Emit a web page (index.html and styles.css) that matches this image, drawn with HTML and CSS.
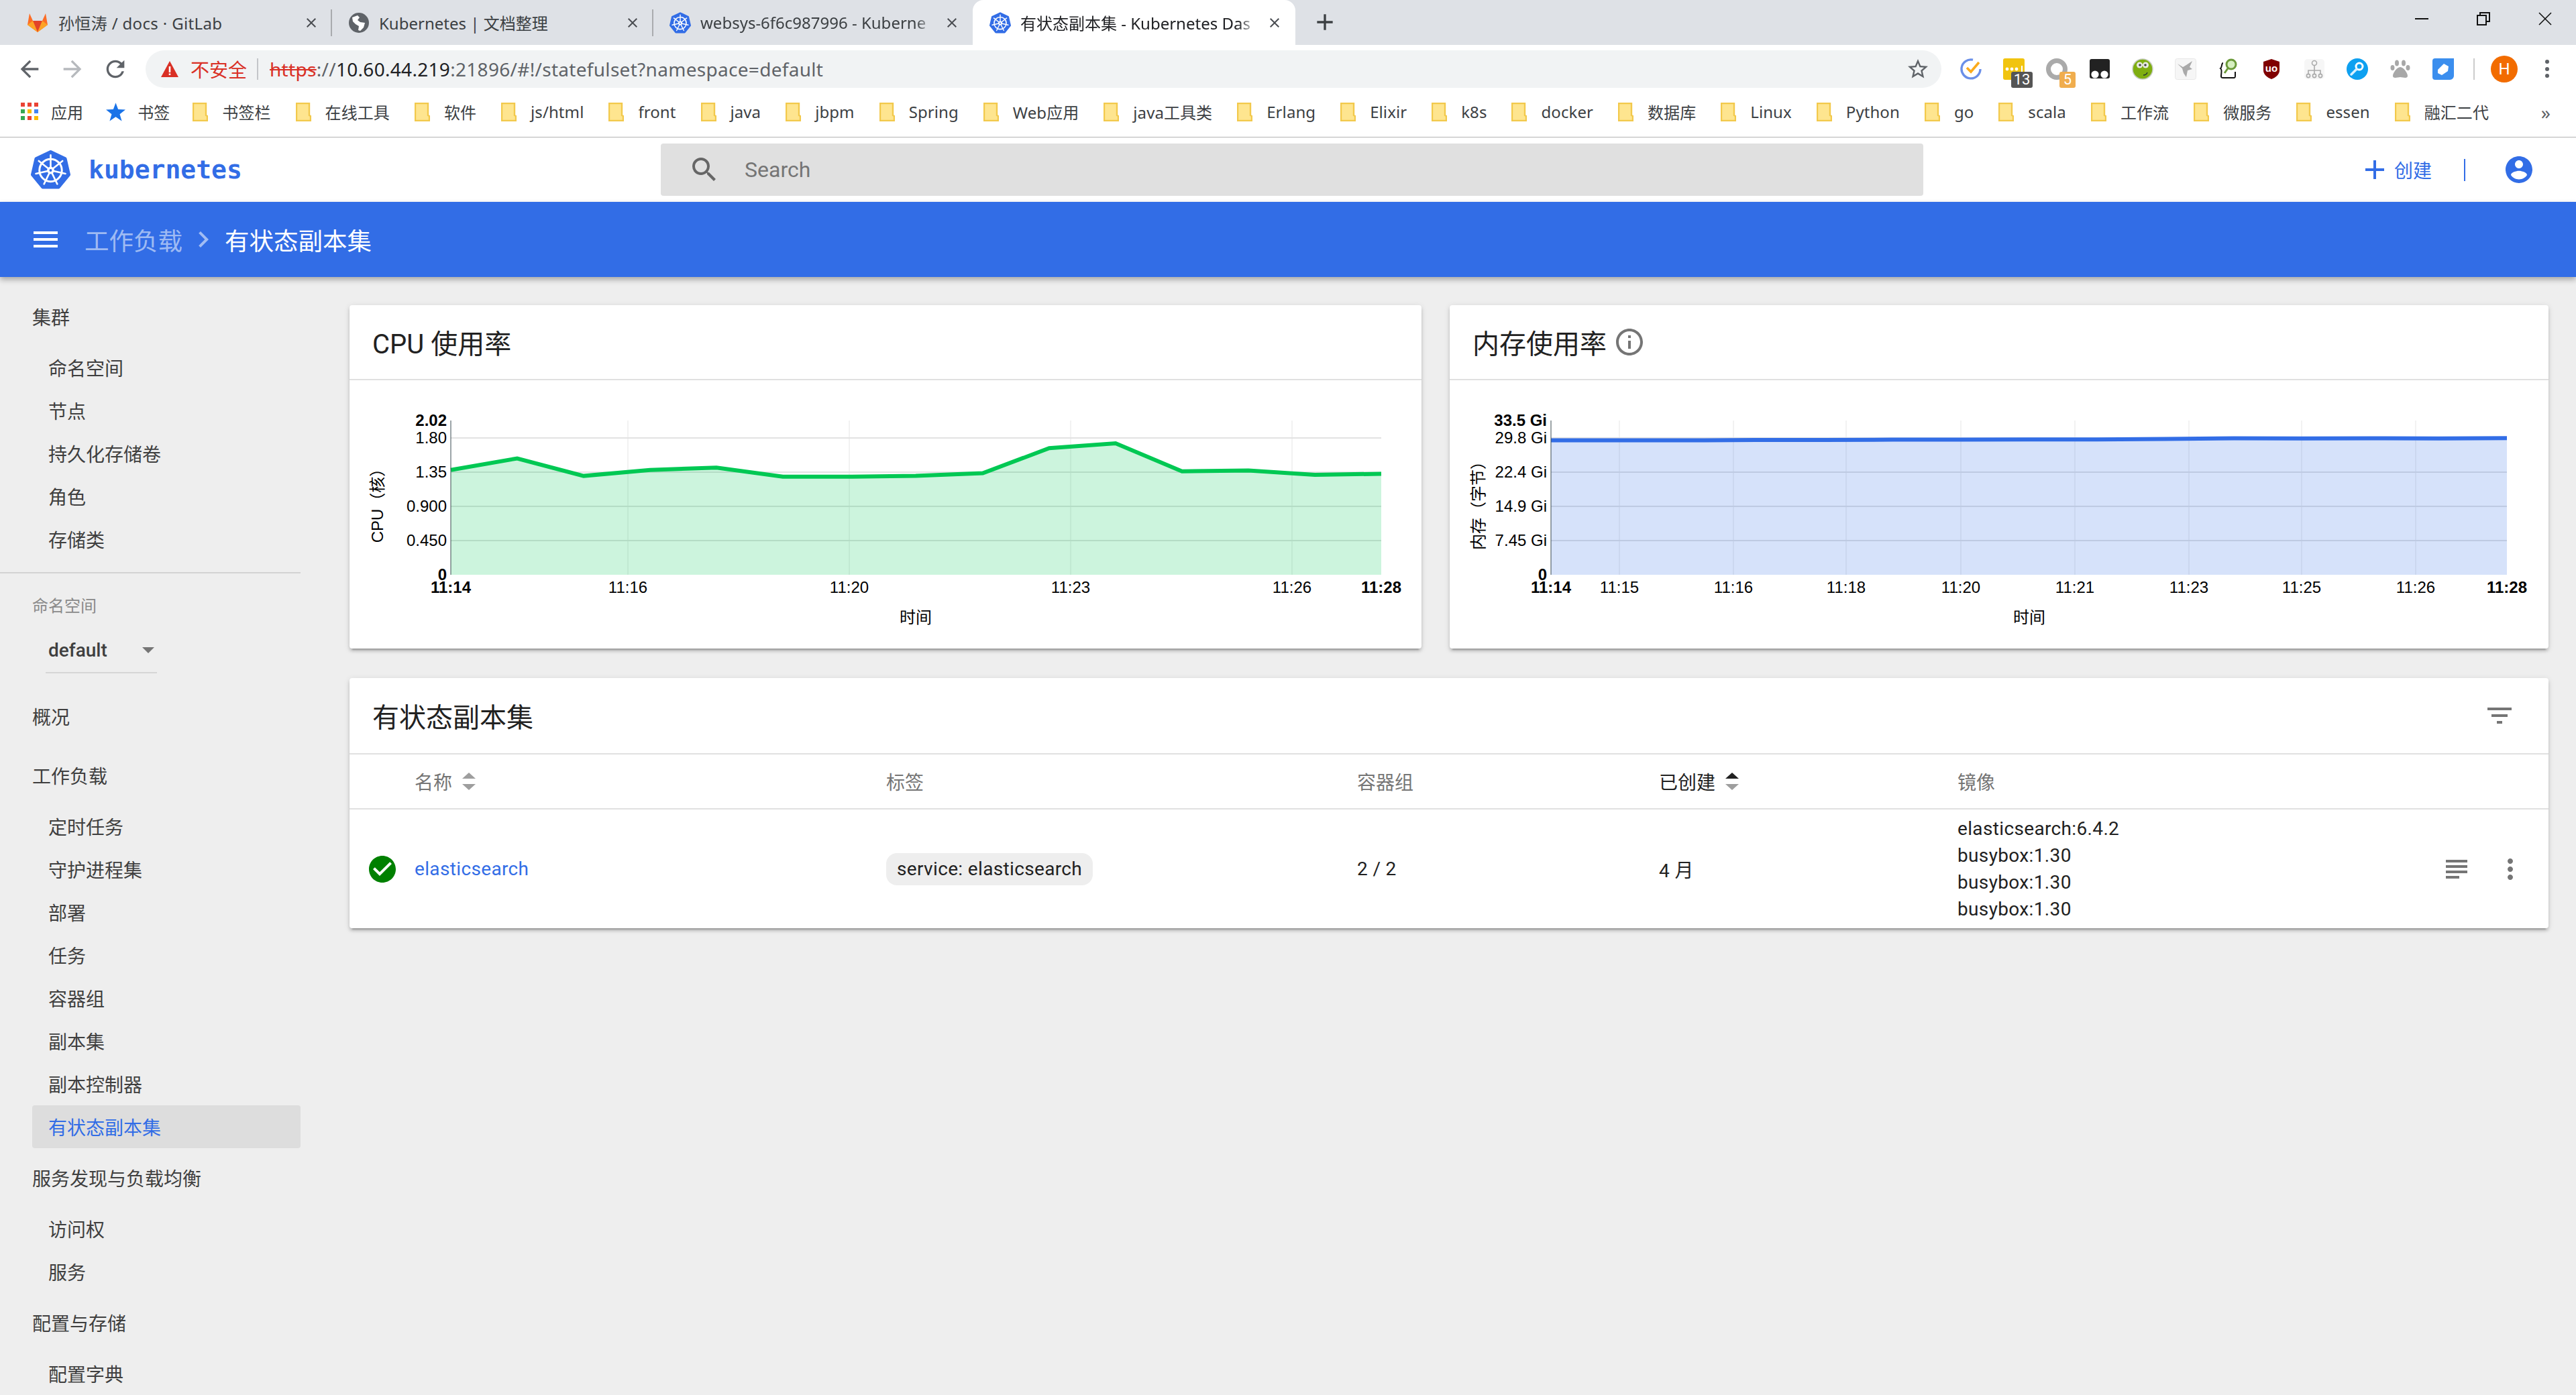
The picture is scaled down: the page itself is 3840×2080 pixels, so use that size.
FILE: index.html
```html
<!DOCTYPE html>
<html lang="zh">
<head>
<meta charset="utf-8">
<title>有状态副本集 - Kubernetes Dashboard</title>
<link rel="stylesheet" href="styles.css">
</head>
<body>
<svg class="defs" width="0" height="0">
  <symbol id="k8s" viewBox="0 0 60 60">
    <polygon points="30,3 52,13.5 57.5,37.5 42,56.5 18,56.5 2.5,37.5 8,13.5" fill="#326de6" stroke="#326de6" stroke-width="5" stroke-linejoin="round"/>
    <circle cx="30" cy="31" r="17" fill="none" stroke="#fff" stroke-width="3"/>
    <path d="M30 31V8M30 31L48 16.7M30 31L52.4 36.1M30 31L40 51.7M30 31L20 51.7M30 31L7.6 36.1M30 31L12 16.7" stroke="#fff" stroke-width="2.6" stroke-linecap="round"/>
    <circle cx="30" cy="31" r="5.5" fill="#fff"/>
    <circle cx="30" cy="31" r="2" fill="#326de6"/>
  </symbol>
  <symbol id="folder" viewBox="0 0 23 28">
    <path d="M1 1H20V19L22 20V27H1Z" fill="#fee58f" stroke="#f2c94c" stroke-width="2.4"/>
  </symbol>
  <symbol id="x" viewBox="0 0 24 24">
    <path d="M19 6.41L17.59 5 12 10.59 6.41 5 5 6.41 10.59 12 5 17.59 6.41 19 12 13.41 17.59 19 19 17.59 13.41 12z"/>
  </symbol>
  <symbol id="add" viewBox="0 0 24 24"><path d="M19 13h-6v6h-2v-6H5v-2h6V5h2v6h6v2z"/></symbol>
</svg>

<div class="tabstrip">
  <div class="tab tab-first">
    <svg class="favicon" viewBox="0 0 32 32"><path d="M16 30L1 19 4 2l5 11h14l5-11 3 17z" fill="#fc6d26"/><path d="M16 30L9 13h14z" fill="#e24329"/><path d="M16 30L1 19l8-6z" fill="#fca326"/><path d="M16 30l15-11-8-6z" fill="#fca326"/></svg>
    <span class="tab-label">孙恒涛 / docs · GitLab</span>
    <svg class="tab-close"><use href="#x"/></svg>
  </div>
  <div class="tab">
    <svg class="favicon" viewBox="0 0 32 32"><circle cx="16" cy="16" r="15" fill="#5f6368"/><path d="M6 8l8-3 3 3-3 4 4 3 7 1-2 7-5 5-3-1 1-6-5-3-4-4z" fill="#fff"/></svg>
    <span class="tab-label">Kubernetes | 文档整理</span>
    <svg class="tab-close"><use href="#x"/></svg>
  </div>
  <div class="tab tab-last">
    <svg class="favicon"><use href="#k8s"/></svg>
    <span class="tab-label tab-fade">websys-6f6c987996 - Kuberne</span>
    <svg class="tab-close"><use href="#x"/></svg>
  </div>
  <div class="tab tab-active">
    <svg class="favicon"><use href="#k8s"/></svg>
    <span class="tab-label tab-fade">有状态副本集 - Kubernetes Das</span>
    <svg class="tab-close"><use href="#x"/></svg>
  </div>
  <svg class="new-tab"><use href="#add"/></svg>
  <div class="window-controls">
    <div class="win-btn"><svg viewBox="0 0 20 20" width="20" height="20"><path d="M0 10h20" stroke="#111" stroke-width="2"/></svg></div>
    <div class="win-btn"><svg viewBox="0 0 20 20" width="20" height="20"><path d="M1 5h13v14H1zM5 5V1h14v13h-5" fill="none" stroke="#111" stroke-width="2"/></svg></div>
    <div class="win-btn"><svg viewBox="0 0 20 20" width="20" height="20"><path d="M1 1l18 18M19 1L1 19" stroke="#111" stroke-width="1.6"/></svg></div>
  </div>
</div>

<div class="toolbar">
  <div class="nav-btns">
    <svg class="nav-icon" viewBox="0 0 24 24"><path d="M20 11H7.83l5.59-5.59L12 4l-8 8 8 8 1.41-1.41L7.83 13H20v-2z"/></svg>
    <svg class="nav-icon nav-off" viewBox="0 0 24 24"><path d="M12 4l-1.41 1.41L16.17 11H4v2h12.17l-5.58 5.59L12 20l8-8z"/></svg>
    <svg class="nav-icon" viewBox="0 0 24 24"><path d="M17.65 6.35A7.958 7.958 0 0 0 12 4c-4.42 0-7.99 3.58-7.99 8s3.57 8 7.99 8c3.73 0 6.84-2.55 7.73-6h-2.08A5.99 5.99 0 0 1 12 18c-3.31 0-6-2.69-6-6s2.69-6 6-6c1.66 0 3.14.69 4.22 1.78L13 11h7V4l-2.35 2.35z"/></svg>
  </div>
  <div class="omnibox">
    <svg class="warn" viewBox="0 0 28 28"><path d="M14 2L27 26H1z" fill="#d93025"/><path d="M12.7 10h2.6v9h-2.6zM12.7 20.5h2.6V23h-2.6z" fill="#fff"/></svg>
    <span class="insecure">不安全</span>
    <span class="omni-sep"></span>
    <span class="url"><s class="scheme">https</s>://<span class="host">10.60.44.219</span>:21896/#!/statefulset?namespace=default</span>
    <svg class="star" viewBox="0 0 24 24"><path d="M22 9.24l-7.19-.62L12 2 9.19 8.63 2 9.24l5.46 4.73L5.82 21 12 17.27 18.18 21l-1.63-7.03L22 9.24zM12 15.4l-3.76 2.27 1-4.28-3.32-2.88 4.38-.38L12 6.1l1.71 4.04 4.38.38-3.32 2.88 1 4.28L12 15.4z"/></svg>
  </div>
  <div class="extensions">
    <div class="ext"><svg viewBox="0 0 32 32"><path d="M19 2.2A14 14 0 1 0 30 16" fill="none" stroke="#6a8fe8" stroke-width="3.4"/><path d="M10 14l6 6L28 6" fill="none" stroke="#fbab1c" stroke-width="3.6"/></svg></div>
    <div class="ext"><svg viewBox="0 0 32 32"><rect width="32" height="32" rx="3" fill="#f1c40f"/><circle cx="6" cy="16" r="2.4" fill="#fff"/><circle cx="13" cy="16" r="2.4" fill="#fff"/><circle cx="20" cy="16" r="2.4" fill="#fff"/><path d="M28 11v9" stroke="#fff" stroke-width="2"/></svg><span class="ext-badge badge-dark">13</span></div>
    <div class="ext"><svg viewBox="0 0 32 32"><circle cx="16" cy="16" r="12.5" fill="none" stroke="#aaa" stroke-width="7"/></svg><span class="ext-badge badge-orange">5</span></div>
    <div class="ext"><svg viewBox="0 0 32 32"><path d="M4 1h24a3 3 0 0 1 3 3v23a3 3 0 0 1-3 3H4a3 3 0 0 1-3-3V4a3 3 0 0 1 3-3z" fill="#222"/><circle cx="9" cy="24" r="5.6" fill="#fff"/><circle cx="23" cy="24" r="5.6" fill="#fff"/></svg></div>
    <div class="ext"><svg viewBox="0 0 32 32"><circle cx="16" cy="16" r="15" fill="#7fae10" stroke="#c5cbbf" stroke-width="1.5"/><circle cx="11.500" cy="10" r="4.500" fill="#e8ebe0"/><circle cx="20.500" cy="10" r="4.500" fill="#e8ebe0"/><circle cx="12" cy="10" r="1.800" fill="#444"/><circle cx="20" cy="10" r="1.800" fill="#444"/><path d="M17 25c3 0 5-1 6-4" fill="none" stroke="#233" stroke-width="1.3"/></svg></div>
    <div class="ext"><svg viewBox="0 0 32 32"><rect x="0.500" y="0.500" width="31" height="31" rx="3" fill="#f6f6f6" stroke="#e8e8e8"/><path d="M4 8l8 5 5-3 9-6-4 9 4 3-7 2-2 10-4-6-2-7z" fill="#a9a9a9"/></svg></div>
    <div class="ext"><svg viewBox="0 0 32 32"><path d="M8 7C5 7 7 13 4 15c3 2 1 6 1 12 0 2 1 2 3 2h16c2 0 2-1 2-3v-6" fill="none" stroke="#111" stroke-width="2"/><circle cx="20" cy="9" r="7" fill="#d6efc0" stroke="#6b9a3a" stroke-width="3"/><path d="M15 15l-5 7" stroke="#6b9a3a" stroke-width="3"/></svg></div>
    <div class="ext"><svg viewBox="0 0 32 32"><path d="M16 1l12 4v13c0 6-6 11-12 13C10 29 4 24 4 18V5z" fill="#800000"/><text class="ublock" x="16" y="20">uo</text></svg></div>
    <div class="ext"><svg viewBox="0 0 32 32"><rect x="1" y="1" width="30" height="30" rx="5" fill="#f6f6f6"/><circle cx="16" cy="7" r="3.500" fill="none" stroke="#aaa" stroke-width="1.600"/><path d="M16 10v8M7 23v-5h18v5M16 18v5" fill="none" stroke="#aaa" stroke-width="1.600"/><circle cx="7" cy="26" r="2.600" fill="none" stroke="#aaa" stroke-width="1.600"/><circle cx="16" cy="26" r="2.600" fill="none" stroke="#aaa" stroke-width="1.600"/><circle cx="25" cy="26" r="2.600" fill="none" stroke="#aaa" stroke-width="1.600"/></svg></div>
    <div class="ext"><svg viewBox="0 0 32 32"><circle cx="16" cy="16" r="16" fill="#0ea0f0"/><circle cx="19" cy="12" r="5" fill="none" stroke="#fff" stroke-width="3"/><path d="M15 16L7 24" stroke="#d9f0ff" stroke-width="3.500" stroke-linecap="round"/></svg></div>
    <div class="ext"><svg viewBox="0 0 32 32" fill="#a8a8a8"><ellipse cx="11" cy="7" rx="3" ry="4.500"/><ellipse cx="21" cy="7" rx="3" ry="4.500"/><ellipse cx="4.500" cy="14" rx="3" ry="4"/><ellipse cx="27.500" cy="14" rx="3" ry="4"/><path d="M16 13c5 0 11 9 11 13 0 5-7 2-11 2s-11 3-11-2c0-4 6-13 11-13z"/></svg></div>
    <div class="ext"><svg viewBox="0 0 32 32"><path d="M4 0H32V26a6 6 0 0 1-6 6H4a4 4 0 0 1-4-4V4a4 4 0 0 1 4-4z" fill="#3b8eee"/><path d="M8 17l9-9 7 4-1 7-9 6-6-3z" fill="#fff"/></svg></div>
  </div>
  <span class="tool-sep"></span>
  <div class="avatar">H</div>
  <svg class="chrome-menu" viewBox="0 0 8 32"><circle cx="4" cy="5" r="3"/><circle cx="4" cy="16" r="3"/><circle cx="4" cy="26" r="3"/></svg>
</div>

<div class="bookmarks">
  <div class="bm bm-lead">
    <svg class="bm-apps" viewBox="0 0 27 27"><path fill="#ea4335" d="M0 0h6v6H0zM10 0h6v6h-6zM20 0h6v6h-6z"/><path fill="#34a853" d="M0 10h6v6H0z"/><path fill="#fbbc04" d="M10 10h6v6h-6z"/><path fill="#4285f4" d="M20 10h6v6h-6z"/><path fill="#34a853" d="M0 20h6v6H0z"/><path fill="#ea4335" d="M10 20h6v6h-6z"/><path fill="#fbbc04" d="M20 20h6v6h-6z"/></svg>
    <span>应用</span>
  </div>
  <div class="bm bm-lead">
    <svg class="bm-star" viewBox="0 0 24 24"><path fill="#1a73e8" d="M12 1l3 8 9 .5-7 5.500 2.500 8.500L12 18.500 4.500 23.500 7 15 0 9.500 9 9z"/></svg>
    <span>书签</span>
  </div>
  <div class="bm"><svg class="bm-folder"><use href="#folder"/></svg><span>书签栏</span></div>
  <div class="bm"><svg class="bm-folder"><use href="#folder"/></svg><span>在线工具</span></div>
  <div class="bm"><svg class="bm-folder"><use href="#folder"/></svg><span>软件</span></div>
  <div class="bm"><svg class="bm-folder"><use href="#folder"/></svg><span>js/html</span></div>
  <div class="bm"><svg class="bm-folder"><use href="#folder"/></svg><span>front</span></div>
  <div class="bm"><svg class="bm-folder"><use href="#folder"/></svg><span>java</span></div>
  <div class="bm"><svg class="bm-folder"><use href="#folder"/></svg><span>jbpm</span></div>
  <div class="bm"><svg class="bm-folder"><use href="#folder"/></svg><span>Spring</span></div>
  <div class="bm"><svg class="bm-folder"><use href="#folder"/></svg><span>Web应用</span></div>
  <div class="bm"><svg class="bm-folder"><use href="#folder"/></svg><span>java工具类</span></div>
  <div class="bm"><svg class="bm-folder"><use href="#folder"/></svg><span>Erlang</span></div>
  <div class="bm"><svg class="bm-folder"><use href="#folder"/></svg><span>Elixir</span></div>
  <div class="bm"><svg class="bm-folder"><use href="#folder"/></svg><span>k8s</span></div>
  <div class="bm"><svg class="bm-folder"><use href="#folder"/></svg><span>docker</span></div>
  <div class="bm"><svg class="bm-folder"><use href="#folder"/></svg><span>数据库</span></div>
  <div class="bm"><svg class="bm-folder"><use href="#folder"/></svg><span>Linux</span></div>
  <div class="bm"><svg class="bm-folder"><use href="#folder"/></svg><span>Python</span></div>
  <div class="bm"><svg class="bm-folder"><use href="#folder"/></svg><span>go</span></div>
  <div class="bm"><svg class="bm-folder"><use href="#folder"/></svg><span>scala</span></div>
  <div class="bm"><svg class="bm-folder"><use href="#folder"/></svg><span>工作流</span></div>
  <div class="bm"><svg class="bm-folder"><use href="#folder"/></svg><span>微服务</span></div>
  <div class="bm"><svg class="bm-folder"><use href="#folder"/></svg><span>essen</span></div>
  <div class="bm"><svg class="bm-folder"><use href="#folder"/></svg><span>融汇二代</span></div>
  <span class="bm-more">»</span>
</div>

<header class="app-header">
  <div class="brand">
    <svg class="brand-logo"><use href="#k8s"/></svg>
    <span class="brand-name">kubernetes</span>
  </div>
  <div class="search">
    <svg class="icon48 search-icon" viewBox="0 0 24 24"><path d="M15.5 14h-.79l-.28-.27A6.471 6.471 0 0 0 16 9.500 6.500 6.500 0 1 0 9.500 16c1.610 0 3.090-.59 4.230-1.570l.27.28v.79l5 4.990L20.490 19l-4.990-5zm-6 0C7.010 14 5 11.990 5 9.500S7.010 5 9.500 5 14 7.010 14 9.500 11.990 14 9.500 14z"/></svg>
    <span class="search-text">Search</span>
  </div>
  <div class="header-actions">
    <svg class="icon48 blue"><use href="#add"/></svg>
    <span class="create">创建</span>
    <span class="action-sep"></span>
    <svg class="icon48 blue account" viewBox="0 0 24 24"><path d="M12 2C6.480 2 2 6.480 2 12s4.480 10 10 10 10-4.480 10-10S17.520 2 12 2zm0 3c1.660 0 3 1.340 3 3s-1.340 3-3 3-3-1.340-3-3 1.340-3 3-3zm0 14.200c-2.500 0-4.710-1.280-6-3.220.03-1.990 4-3.080 6-3.080 1.990 0 5.970 1.090 6 3.080-1.290 1.940-3.500 3.220-6 3.220z"/></svg>
  </div>
</header>

<div class="crumbs">
  <svg class="icon48 white" viewBox="0 0 24 24"><path d="M3 18h18v-2H3v2zm0-5h18v-2H3v2zm0-7v2h18V6H3z"/></svg>
  <span class="crumb-parent">工作负载</span>
  <svg class="icon48 crumb-chevron" viewBox="0 0 24 24"><path d="M10 6L8.590 7.410 13.170 12l-4.580 4.590L10 18l6-6z"/></svg>
  <span class="crumb-current">有状态副本集</span>
</div>

<div class="layout">
  <nav class="sidebar">
    <div class="nav-parent">集群</div>
    <div class="nav-child">命名空间</div>
    <div class="nav-child">节点</div>
    <div class="nav-child">持久化存储卷</div>
    <div class="nav-child">角色</div>
    <div class="nav-child">存储类</div>
    <div class="nav-divider"></div>
    <div class="ns-label">命名空间</div>
    <div class="ns-select"><span>default</span><span class="ns-caret"></span></div>
    <div class="nav-parent">概况</div>
    <div class="nav-parent">工作负载</div>
    <div class="nav-child">定时任务</div>
    <div class="nav-child">守护进程集</div>
    <div class="nav-child">部署</div>
    <div class="nav-child">任务</div>
    <div class="nav-child">容器组</div>
    <div class="nav-child">副本集</div>
    <div class="nav-child">副本控制器</div>
    <div class="nav-child nav-active">有状态副本集</div>
    <div class="nav-parent">服务发现与负载均衡</div>
    <div class="nav-child">访问权</div>
    <div class="nav-child">服务</div>
    <div class="nav-parent">配置与存储</div>
    <div class="nav-child">配置字典</div>
  </nav>

  <main class="content">
    <div class="charts">
      <section class="card chart-cpu">
        <div class="card-title">CPU 使用率</div>
        <svg class="chart" viewBox="521 567 1598 400">
          <g class="grid-v">
            <path d="M936 627V857M1266 627V857M1596 627V857M1926 627V857"/>
          </g>
          <g class="grid-h">
            <path d="M672 653H2059M672 704H2059M672 755H2059M672 806H2059"/>
          </g>
          <path class="area-green" d="M672 700.700L771 683.500 870 709.600 969 700.700 1068 697.200 1167 710.700 1266 710.700 1365 709.600 1465 705.500 1564 668.300 1663 661 1762 702.700 1861 701.400 1960 707.900 2059 706.500V857H672Z"/>
          <path class="line-green" d="M672 700.700L771 683.500 870 709.600 969 700.700 1068 697.200 1167 710.700 1266 710.700 1365 709.600 1465 705.500 1564 668.300 1663 661 1762 702.700 1861 701.400 1960 707.900 2059 706.500"/>
          <path class="axis" d="M672 627V857"/>
          <g class="tick end">
            <text class="bold" x="666" y="635">2.02</text>
            <text x="666" y="661">1.80</text>
            <text x="666" y="712">1.35</text>
            <text x="666" y="763">0.900</text>
            <text x="666" y="814">0.450</text>
            <text class="bold" x="666" y="865">0</text>
          </g>
          <g class="tick mid">
            <text class="bold" x="672" y="884">11:14</text>
            <text x="936" y="884">11:16</text>
            <text x="1266" y="884">11:20</text>
            <text x="1596" y="884">11:23</text>
            <text x="1926" y="884">11:26</text>
            <text class="bold" x="2059" y="884">11:28</text>
            <text x="1365" y="929">时间</text>
          </g>
          <text class="tick mid" transform="translate(571 748) rotate(-90)">CPU（核）</text>
        </svg>
      </section>
      <section class="card chart-mem">
        <div class="card-title">内存使用率<svg class="icon48 grey info" viewBox="0 0 24 24"><path d="M11 17h2v-6h-2v6zm1-15C6.480 2 2 6.480 2 12s4.480 10 10 10 10-4.480 10-10S17.520 2 12 2zm0 18c-4.410 0-8-3.590-8-8s3.590-8 8-8 8 3.590 8 8-3.590 8-8 8zm-1-11h2V7h-2v2z"/></svg></div>
        <svg class="chart" viewBox="2161 567 1638 400">
          <g class="grid-v">
            <path d="M2414 627V857M2584 627V857M2752 627V857M2923 627V857M3093 627V857M3263 627V857M3431 627V857M3601 627V857"/>
          </g>
          <g class="grid-h">
            <path d="M2312 653H3737M2312 704H3737M2312 755H3737M2312 806H3737"/>
          </g>
          <path class="area-blue" d="M2312 656.600L2414 656.600 2516 656.600 2617 655.900 2719 655.900 2821 655.600 2923 655.600 3025 655.200 3126 655.200 3228 654.500 3330 653.500 3432 653.800 3534 653.500 3635 653.800 3737 653.200V857H2312Z"/>
          <path class="line-blue" d="M2312 656.600L2414 656.600 2516 656.600 2617 655.900 2719 655.900 2821 655.600 2923 655.600 3025 655.200 3126 655.200 3228 654.500 3330 653.500 3432 653.800 3534 653.500 3635 653.800 3737 653.200"/>
          <path class="axis" d="M2312 627V857"/>
          <g class="tick end">
            <text class="bold" x="2306" y="635">33.5 Gi</text>
            <text x="2306" y="661">29.8 Gi</text>
            <text x="2306" y="712">22.4 Gi</text>
            <text x="2306" y="763">14.9 Gi</text>
            <text x="2306" y="814">7.45 Gi</text>
            <text class="bold" x="2306" y="865">0</text>
          </g>
          <g class="tick mid">
            <text class="bold" x="2312" y="884">11:14</text>
            <text x="2414" y="884">11:15</text>
            <text x="2584" y="884">11:16</text>
            <text x="2752" y="884">11:18</text>
            <text x="2923" y="884">11:20</text>
            <text x="3093" y="884">11:21</text>
            <text x="3263" y="884">11:23</text>
            <text x="3431" y="884">11:25</text>
            <text x="3601" y="884">11:26</text>
            <text class="bold" x="3737" y="884">11:28</text>
            <text x="3025" y="929">时间</text>
          </g>
          <text class="tick mid" transform="translate(2212 748) rotate(-90)">内存（字节）</text>
        </svg>
      </section>
    </div>

    <section class="card table-card">
      <div class="card-title table-title">
        <span>有状态副本集</span>
        <svg class="icon48 grey" viewBox="0 0 24 24"><path d="M10 18h4v-2h-4v2zM3 6v2h18V6H3zm3 7h12v-2H6v2z"/></svg>
      </div>
      <div class="table-row table-head">
        <span></span>
        <span class="th">名称<span class="sort"><i class="sort-up"></i><i class="sort-down"></i></span></span>
        <span class="th">标签</span>
        <span class="th">容器组</span>
        <span class="th th-active">已创建<span class="sort"><i class="sort-up sort-on"></i><i class="sort-down"></i></span></span>
        <span class="th">镜像</span>
        <span></span>
      </div>
      <div class="table-row table-body">
        <svg class="icon48 ok" viewBox="0 0 24 24"><path d="M12 2C6.480 2 2 6.480 2 12s4.480 10 10 10 10-4.480 10-10S17.520 2 12 2zm-2 15l-5-5 1.410-1.410L10 14.170l7.590-7.590L19 8l-9 9z"/></svg>
        <a class="name-link">elasticsearch</a>
        <span><span class="chip">service: elasticsearch</span></span>
        <span>2 / 2</span>
        <span>4 月</span>
        <div class="images"><div>elasticsearch:6.4.2</div><div>busybox:1.30</div><div>busybox:1.30</div><div>busybox:1.30</div></div>
        <div class="row-actions">
          <svg class="icon48 grey" viewBox="0 0 24 24"><path d="M14 17H4v2h10v-2zm6-8H4v2h16V9zM4 15h16v-2H4v2zM4 5v2h16V5H4z"/></svg>
          <svg class="icon48 grey" viewBox="0 0 24 24"><path d="M12 8c1.100 0 2-.9 2-2s-.9-2-2-2-2 .9-2 2 .9 2 2 2zm0 2c-1.100 0-2 .9-2 2s.9 2 2 2 2-.9 2-2-.9-2-2-2zm0 6c-1.100 0-2 .9-2 2s.9 2 2 2 2-.9 2-2-.9-2-2-2z"/></svg>
        </div>
      </div>
    </section>
  </main>
</div>
</body>
</html>
```

FILE: styles.css
```css
* { box-sizing: border-box; }
html, body { margin: 0; height: 2080px; overflow: hidden; }
body {
  background: #eee;
  color: #333;
  font-family: Roboto, "Noto Sans CJK SC", sans-serif;
  font-size: 28px;
  display: flex;
  flex-direction: column;
}
.defs { position: absolute; }
svg { display: block; flex: none; }

/* browser tab strip */
.tabstrip {
  height: 67px;
  flex: none;
  background: #dee1e6;
  display: flex;
  padding-left: 16px;
  font-family: "Noto Sans", "Noto Sans CJK SC", sans-serif;
  font-size: 24px;
  color: #3c4043;
}
.tab {
  width: 479px;
  height: 67px;
  display: flex;
  align-items: center;
  padding: 0 19px 0 24px;
  gap: 14px;
  position: relative;
}
.tab::after {
  content: "";
  position: absolute;
  right: 0;
  top: 14px;
  height: 40px;
  width: 2px;
  background: #a9abae;
}
.tab-first { gap: 15px; }
.tab-first .tab-label { letter-spacing: 0.35px; }
.tab-last { width: 476px; }
.tab-last::after, .tab-active::after { display: none; }
.tab-active {
  background: #fff;
  border-radius: 16px 16px 0 0;
  color: #202124;
  width: 481px;
  padding-left: 25px;
}
.favicon { width: 32px; height: 32px; }
.tab-label {
  flex: 1;
  min-width: 0;
  white-space: nowrap;
}
.tab-fade {
  -webkit-mask-image: linear-gradient(to right, #000 92%, transparent);
  mask-image: linear-gradient(to right, #000 92%, transparent);
}
.tab-close { width: 24px; height: 24px; fill: #4a4d52; }
.new-tab { width: 40px; height: 40px; margin: 13px 0 0 24px; fill: #3c4043; }
.window-controls { margin-left: auto; display: flex; height: 56px; }
.win-btn { width: 92px; display: flex; align-items: center; justify-content: center; }

/* browser toolbar */
.toolbar {
  height: 64px;
  flex: none;
  background: #fff;
  display: flex;
  align-items: center;
  padding: 8px 0 0 24px;
}
.nav-btns { display: flex; gap: 24px; }
.nav-icon { width: 40px; height: 40px; fill: #5f6368; }
.nav-off { fill: #b6b9bd; }
.omnibox {
  width: 2677px;
  height: 56px;
  margin-left: 25px;
  background: #f1f3f4;
  border-radius: 28px;
  display: flex;
  align-items: center;
  padding-left: 22px;
}
.warn { width: 28px; height: 28px; }
.insecure { margin-left: 17px; color: #d93025; font-size: 28px; width: 84px; white-space: nowrap; }
.omni-sep { width: 2px; height: 32px; background: #c4c6c9; margin: 0 17px 0 15px; }
.url { color: #5f6368; font: 28px "Noto Sans", sans-serif; letter-spacing: 0.3px; white-space: nowrap; flex: 1; }
.scheme { color: #d93025; }
.host { color: #202124; }
.star { width: 36px; height: 36px; fill: #5f6368; margin-right: 17px; }
.extensions { display: flex; gap: 32px; margin-left: 28px; }
.ext { width: 32px; height: 32px; position: relative; }
.ext > svg { width: 32px; height: 32px; }
.ext-badge {
  position: absolute;
  top: 20px;
  height: 24px;
  border-radius: 3px;
  color: #fff;
  font: 22px/24px Roboto, sans-serif;
  text-align: center;
}
.badge-dark { left: 12px; width: 32px; background: #555; }
.badge-orange { left: 20px; width: 24px; background: #f0ad4e; }
.ublock { font: bold 15px "Liberation Sans", sans-serif; fill: #fff; text-anchor: middle; }
.tool-sep { width: 2px; height: 32px; background: #ccc; margin: 0 24px 0 29px; }
.avatar {
  width: 40px;
  height: 40px;
  border-radius: 50%;
  background: #f26c00;
  color: #fff;
  font: 24px/40px Roboto, sans-serif;
  text-align: center;
}
.chrome-menu { width: 8px; height: 32px; fill: #5f6368; margin-left: 40px; }

/* bookmarks */
.bookmarks {
  height: 74px;
  flex: none;
  background: #fff;
  border-bottom: 1px solid #b4b4b4;
  display: flex;
  align-items: center;
  padding: 0 0 2px 31px;
  gap: 37px;
  font-family: "Noto Sans", "Noto Sans CJK SC", sans-serif;
  font-size: 24px;
  letter-spacing: 0.08px;
  color: #3c4043;
  white-space: nowrap;
}
.bm { display: flex; align-items: center; gap: 21px; }
.bm-lead { gap: 18px; margin-right: -3px; }
.bm-apps { width: 27px; height: 27px; }
.bm-star { width: 29px; height: 29px; }
.bm-folder { width: 23px; height: 28px; }
.bm-more { margin-left: auto; margin-right: 38px; font-size: 28px; color: #5f6368; }

/* app header */
.app-header {
  height: 96px;
  flex: none;
  background: #fff;
  display: flex;
  align-items: center;
  padding-left: 46px;
}
.brand { width: 939px; display: flex; align-items: center; gap: 27px; }
.brand-logo { width: 59px; height: 60px; }
.brand-name {
  font: bold 38px "DejaVu Sans Mono", monospace;
  color: #326de6;
}
.search {
  width: 1882px;
  height: 78px;
  background: #e0e0e0;
  border-radius: 4px;
  display: flex;
  align-items: center;
  padding-left: 41px;
}
.search-icon { fill: #666; }
.search-text { margin-left: 36px; font-size: 32px; color: #757575; }
.icon48 { width: 48px; height: 48px; }
.blue { fill: #326de6; color: #326de6; }
.white { fill: #fff; }
.grey { fill: #757575; }
.header-actions { display: flex; align-items: center; margin-left: 649px; }
.create { color: #326de6; margin-left: 5px; }
.action-sep { width: 2px; height: 33px; background: #326de6; margin-left: 48px; }
.account { margin-left: 56px; }

/* breadcrumb */
.crumbs {
  height: 112px;
  flex: none;
  background: #326de6;
  display: flex;
  align-items: center;
  padding-left: 44px;
  font-size: 36.500px;
  color: #fff;
  box-shadow: 0 4px 8px rgba(0,0,0,.3);
  position: relative;
}
.crumb-parent { margin-left: 34px; color: rgba(255,255,255,.55); }
.crumb-chevron { margin-left: 7px; fill: rgba(255,255,255,.55); }
.crumb-current { margin-left: 8px; }

/* layout */
.layout { display: flex; flex: 1; min-height: 0; }
.sidebar {
  width: 448px;
  flex: none;
  padding-top: 15px;
  display: flex;
  flex-direction: column;
  color: #3f3f3f;
  white-space: nowrap;
}
.nav-parent, .nav-child { height: 64px; flex: none; display: flex; align-items: center; }
.nav-parent { margin: 12px 0; padding-left: 48px; }
.nav-child { padding-left: 72px; }
.nav-active {
  margin-left: 48px;
  padding-left: 24px;
  background: #ddd;
  border-radius: 4px;
  color: #326de6;
}
.nav-divider { height: 2px; flex: none; background: #d2d2d2; margin-top: 17px; }
.ns-label { font-size: 24px; color: #8a8a8a; padding-left: 48px; line-height: 32px; margin-top: 33px; flex: none; }
.ns-select {
  height: 67px;
  flex: none;
  margin: 17px 214px 20px 68px;
  padding: 0 4px 0 4px;
  border-bottom: 2px solid #d6d6d6;
  display: flex;
  align-items: center;
  justify-content: space-between;
  font-weight: 500;
  font-size: 28px;
}
.ns-caret {
  width: 0;
  height: 0;
  border: 9px solid transparent;
  border-top-color: #757575;
  border-bottom: 0;
}

/* main */
.content { flex: 1; padding: 42px 41px 0 73px; min-width: 0; }
.charts { display: flex; gap: 42px; margin-bottom: 44px; }
.card {
  background: #fff;
  border-radius: 4px;
  box-shadow: 0 6px 2px -4px rgba(0,0,0,.2), 0 4px 4px rgba(0,0,0,.14), 0 2px 10px rgba(0,0,0,.12);
}
.chart-cpu { width: 1598px; }
.chart-mem { width: 1638px; }
.card-title {
  height: 112px;
  display: flex;
  align-items: center;
  padding-left: 34px;
  font-size: 40px;
  color: #212121;
  border-bottom: 2px solid #e0e0e0;
}
.info { margin-left: 10px; }
.chart { width: 100%; height: 400px; }
.grid-v path { stroke: #e5e5e5; stroke-width: 1; fill: none; }
.grid-h path { stroke: #e2e2e2; stroke-width: 2; fill: none; }
.area-green { fill: rgba(0,200,83,.2); }
.line-green { fill: none; stroke: #00c853; stroke-width: 6; }
.area-blue { fill: rgba(50,109,230,.2); }
.line-blue { fill: none; stroke: #326de6; stroke-width: 6; }
.axis { stroke: #3a4a50; stroke-width: 1; }
.tick { font: 24px "Liberation Sans", "Noto Sans CJK SC", sans-serif; fill: #000; }
.end { text-anchor: end; }
.mid { text-anchor: middle; }
.bold { font-weight: bold; }

/* table */
.table-title { justify-content: space-between; padding-right: 49px; height: 114px; }
.table-row {
  display: grid;
  grid-template-columns: 97px 703px 702px 450px 445px 720px 161px;
  align-items: center;
}
.table-head { height: 82px; border-bottom: 2px solid #e0e0e0; color: #757575; }
.th { display: flex; align-items: center; gap: 15px; }
.th-active { color: #212121; }
.sort { display: flex; flex-direction: column; gap: 8px; }
.sort i { display: block; width: 0; height: 0; border: 9px solid transparent; border-left-width: 10px; border-right-width: 10px; }
.sort-up { border-top: 0 !important; border-bottom-color: #9e9e9e !important; }
.sort-down { border-bottom: 0 !important; border-top-color: #9e9e9e !important; }
.sort-on { border-bottom-color: #212121 !important; }
.table-body { height: 177px; color: #212121; letter-spacing: 0.35px; }
.ok { fill: #008000; margin-left: 25px; }
.name-link { color: #326de6; }
.chip {
  display: inline-block;
  height: 48px;
  line-height: 48px;
  padding: 0 16px;
  border-radius: 16px;
  background: #eee;
}
.images { line-height: 40px; }
.row-actions { display: flex; gap: 32px; }
```
